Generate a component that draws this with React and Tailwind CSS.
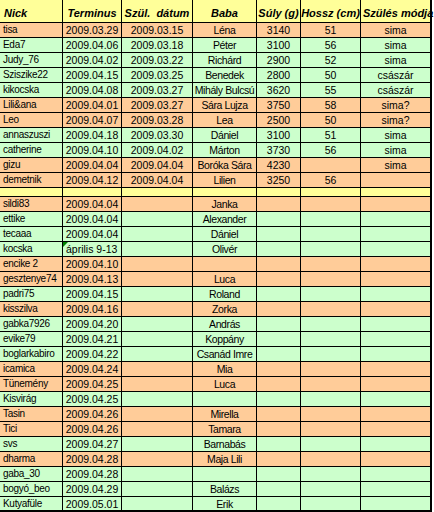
import React from 'react';

const O = 'bg-[#ffcc99]';
const G = 'bg-[#ccffcc]';

const top = [
  ['tisa', '2009.03.29', '2009.03.15', 'Léna', '3140', '51', 'sima', O],
  ['Eda7', '2009.04.06', '2009.03.18', 'Péter', '3100', '56', 'sima', G],
  ['Judy_76', '2009.04.02', '2009.03.22', 'Richárd', '2900', '52', 'sima', G],
  ['Sziszike22', '2009.04.15', '2009.03.25', 'Benedek', '2800', '50', 'császár', G],
  ['kikocska', '2009.04.08', '2009.03.27', 'Mihály Bulcsú', '3620', '55', 'császár', G],
  ['Lili&ana', '2009.04.01', '2009.03.27', 'Sára Lujza', '3750', '58', 'sima?', O],
  ['Leo', '2009.04.07', '2009.03.28', 'Lea', '2500', '50', 'sima?', O],
  ['annaszuszi', '2009.04.18', '2009.03.30', 'Dániel', '3100', '51', 'sima', G],
  ['catherine', '2009.04.10', '2009.04.02', 'Márton', '3730', '56', 'sima', G],
  ['gizu', '2009.04.04', '2009.04.04', 'Boróka Sára', '4230', '', 'sima', O],
  ['demetnik', '2009.04.12', '2009.04.04', 'Lilien', '3250', '56', '', O],
];

const bottom = [
  ['sildi83', '2009.04.04', 'Janka', O],
  ['ettike', '2009.04.04', 'Alexander', G],
  ['tecaaa', '2009.04.04', 'Dániel', G],
  ['kocska', 'április 9-13', 'Olivér', G],
  ['encike 2', '2009.04.10', '', O],
  ['gesztenye74', '2009.04.13', 'Luca', O],
  ['padri75', '2009.04.15', 'Roland', G],
  ['kisszilva', '2009.04.16', 'Zorka', O],
  ['gabka7926', '2009.04.20', 'András', G],
  ['evike79', '2009.04.21', 'Koppány', G],
  ['boglarkabiro', '2009.04.22', 'Csanád Imre', G],
  ['icamica', '2009.04.24', 'Mia', O],
  ['Tünemény', '2009.04.25', 'Luca', O],
  ['Kisvirág', '2009.04.25', '', G],
  ['Tasin', '2009.04.26', 'Mirella', O],
  ['Tici', '2009.04.26', 'Tamara', O],
  ['svs', '2009.04.27', 'Barnabás', G],
  ['dharma', '2009.04.28', 'Maja Lili', O],
  ['gaba_30', '2009.04.28', '', G],
  ['bogyó_beo', '2009.04.29', 'Balázs', G],
  ['Kutyafüle', '2009.05.01', 'Erik', G],
];

const widths = ['w-[63px]', 'w-[59px]', 'w-[71px]', 'w-[64px]', 'w-[44px]', 'w-[60px]', 'w-[71px]'];

// text columns (nick, baba) are set a bit tighter than the numbers
const Cell = ({ i, align = 'center', children, extra = '' }) => (
  <div
    className={`${widths[i]} shrink-0 h-full flex items-center border-r border-black whitespace-nowrap overflow-hidden ${
      align === 'left' ? 'justify-start pl-[3px]' : 'justify-center'
    } ${i === 0 ? 'text-[10px] tracking-[-0.3px]' : ''} ${i === 3 ? 'tracking-[-0.4px]' : ''} ${i === 6 ? 'border-r-2' : ''} ${extra}`}
  >
    {children}
  </div>
);

const headers = ['Nick', 'Terminus', 'Szül.  dátum', 'Baba', 'Súly (g)', 'Hossz (cm)', 'Szülés módja'];

export default function App() {
  return (
    <div
      className="w-[434px] h-[512px] overflow-hidden bg-white text-black text-[10.5px]"
      style={{ fontFamily: '"Liberation Sans", Arial, sans-serif' }}
    >
      <div className="w-[432px]">
        <div className="flex h-[23px] bg-[#ffff99] border-b border-black">
          {headers.map((h, i) => (
            <div
              key={h}
              className={`${widths[i]} shrink-0 h-full flex items-end pb-[3px] border-r border-black whitespace-pre font-bold italic text-[11px] leading-none ${
                i === 0 ? 'justify-start pl-[4px]' : i === 6 ? 'justify-start pl-[2px] border-r-2' : 'justify-center'
              }`}
            >
              {h}
            </div>
          ))}
        </div>

        {top.map((r) => (
          <div key={r[0]} className={`flex h-[15px] leading-[14px] border-b border-black ${r[7]}`}>
            <Cell i={0} align="left">{r[0]}</Cell>
            <Cell i={1}>{r[1]}</Cell>
            <Cell i={2}>{r[2]}</Cell>
            <Cell i={3}>{r[3]}</Cell>
            <Cell i={4}>{r[4]}</Cell>
            <Cell i={5}>{r[5]}</Cell>
            <Cell i={6}>{r[6]}</Cell>
          </div>
        ))}

        <div className="flex h-[9px] bg-[#ffff99] border-b border-black">
          {widths.map((w, i) => (
            <Cell key={i} i={i} />
          ))}
        </div>

        {bottom.map((r, k) => (
          <div
            key={r[0]}
            className={`flex h-[15px] leading-[14px] ${k === bottom.length - 1 ? 'border-b-2' : 'border-b'} border-black ${r[3]}`}
          >
            <Cell i={0} align="left">{r[0]}</Cell>
            <Cell i={1} align={r[1].startsWith('2009') ? 'center' : 'left'} extra="relative">
              {!r[1].startsWith('2009') && (
                <span className="absolute left-0 top-0 w-0 h-0 border-t-[5px] border-r-[5px] border-t-[#008000] border-r-transparent" />
              )}
              {r[1]}
            </Cell>
            <Cell i={2} />
            <Cell i={3}>{r[2]}</Cell>
            <Cell i={4} />
            <Cell i={5} />
            <Cell i={6} />
          </div>
        ))}
      </div>
    </div>
  );
}
